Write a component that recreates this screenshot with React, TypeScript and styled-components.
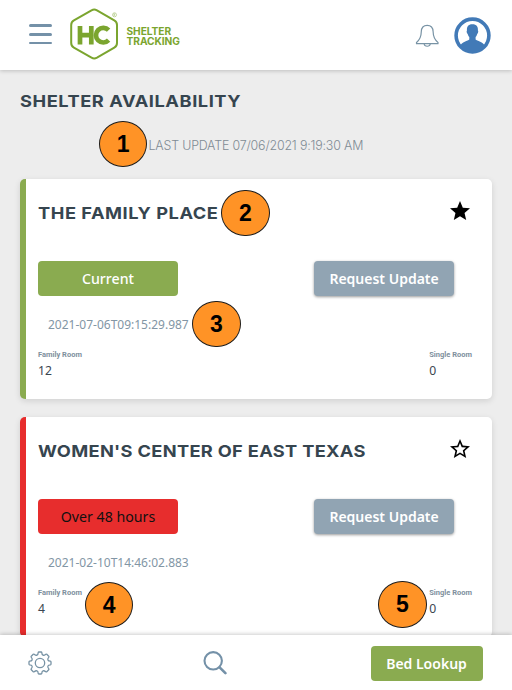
import React from "react";
import styled, { createGlobalStyle } from "styled-components";
import { MdStar, MdStarBorder } from "react-icons/md";

const GlobalStyle = createGlobalStyle`
  *, *::before, *::after { box-sizing: border-box; }
  html, body { margin: 0; padding: 0; overflow: hidden; }
  body { background: #ededed; }
  h1, h2, p { margin: 0; }
  button { border: 0; padding: 0; background: none; display: block; }
  svg { display: block; }
`;

const body = `"Noto Sans", "Open Sans", sans-serif`;
const display = `Inter, "Liberation Sans", sans-serif`;

const Screen = styled.div`
  position: relative;
  display: flex;
  flex-direction: column;
  width: 512px;
  height: 690px;
  overflow: hidden;
  background: #ededed;
  font-family: ${body};
`;

const Header = styled.header`
  z-index: 1;
  display: flex;
  align-items: center;
  flex: 0 0 70px;
  padding: 0 21px 0 29px;
  background: #fff;
  box-shadow: 0 1px 4px rgba(0, 0, 0, 0.2);
`;

const MenuButton = styled.button`
  display: flex;
  flex-direction: column;
  gap: 6.5px;
  width: 23px;
  margin: 0 18px 1.4px 0;
`;

const MenuLine = styled.span`
  height: 2.4px;
  border-radius: 2px;
  background: #7491a8;
`;

const Brand = styled.div`
  display: flex;
  align-items: center;
  flex: 1;
  gap: 7.5px;
`;

const BrandName = styled.div`
  display: flex;
  flex-direction: column;
  padding-top: 1px;
  font: 700 10.2px/10px ${display};
  letter-spacing: -0.05px;
  color: #7ba52f;
`;

const HeaderActions = styled.div`
  display: flex;
  align-items: center;
  gap: 15px;
`;

const Main = styled.main`
  flex: 1;
  min-height: 0;
  overflow: hidden;
  padding: 20px 20px 0;
`;

const PageTitle = styled.h1`
  font: 700 16.6px/22px ${display};
  letter-spacing: 0.49px;
  color: #36454f;
  white-space: nowrap;
  transform: scaleX(1.1);
  transform-origin: left;
`;

const LastUpdate = styled.p`
  margin: 24px 0 24px 128.5px;
  font: 300 12.4px/19px ${display};
  letter-spacing: -0.17px;
  color: #7f8b94;
  white-space: nowrap;
`;

const Card = styled.section<{ $accent: string }>`
  height: 220px;
  margin-bottom: 18px;
  padding: 20px 20px 0 12px;
  border-left: 6px solid ${(p) => p.$accent};
  border-radius: 5px;
  background: #fff;
  box-shadow: 0 2px 6px rgba(0, 0, 0, 0.12);
`;

const CardHeader = styled.div`
  display: flex;
  justify-content: space-between;
  height: 62px;
  color: #000;
`;

const CardTitle = styled.h2<{ $spacing: number }>`
  height: 25px;
  padding-top: 3px;
  font: 700 16.6px/22px ${display};
  letter-spacing: ${(p) => p.$spacing}px;
  color: #36454f;
  white-space: nowrap;
  transform: scaleX(1.1);
  transform-origin: left;
`;

const CardActions = styled.div`
  display: flex;
  justify-content: space-between;
  padding-right: 17.6px;
`;

const Status = styled.div<{ $accent: string; $dark?: boolean }>`
  width: 140px;
  height: 35px;
  border-radius: 4px;
  background: ${(p) => p.$accent};
  color: ${(p) => (p.$dark ? "#111" : "#fff")};
  font: ${(p) => (p.$dark ? 400 : 500)} 14.2px/35px ${body};
  text-align: center;
`;

const ActionButton = styled.button<{ $primary?: boolean }>`
  width: ${(p) => (p.$primary ? 112 : 140.7)}px;
  height: 35px;
  border-radius: 4px;
  background: ${(p) => (p.$primary ? "#8aab50" : "#91a4b3")};
  box-shadow: ${(p) => (p.$primary ? "none" : "0 1px 3px rgba(0, 0, 0, 0.4)")};
  color: #fff;
  font: 600 14px/35px ${body};
  text-align: center;
`;

const Timestamp = styled.p`
  margin: 19px 0 0 10px;
  font: 400 12px/20px ${body};
  color: #8296a5;
`;

const Rooms = styled.div`
  display: flex;
  justify-content: space-between;
  margin-top: 14px;
`;

const RoomLabel = styled.div`
  font: 700 7.5px/12px Roboto, sans-serif;
  color: #7e909d;
  white-space: nowrap;
`;

const RoomCount = styled.div`
  margin-top: 1px;
  font: 400 12.2px/18px ${body};
  color: #3b4650;
`;

const Footer = styled.footer`
  z-index: 1;
  display: grid;
  grid-template-columns: 175px 1fr auto;
  align-items: center;
  flex: 0 0 55px;
  padding: 1px 29.5px 0 28px;
  background: #fff;
  box-shadow: 0 -1px 4px rgba(0, 0, 0, 0.2);
`;

const Marker = styled.span<{ $x: number; $y: number }>`
  position: absolute;
  z-index: 2;
  left: ${(p) => p.$x}px;
  top: ${(p) => p.$y}px;
  width: 48.4px;
  height: 46.6px;
  border: 1.3px solid #1d1d1d;
  border-radius: 50%;
  background: #ff9326;
  color: #000;
  font: 700 23px/45px "Liberation Sans", sans-serif;
  text-align: center;
`;

const Logo = () => (
  <svg width="49" height="54" viewBox="0 0 49 54" fill="none">
    <path
      d="M21.5 2.3Q24.2 .8 27 2.3L44.3 12.3Q47 13.9 47 17V35Q47 38.1 44.3 39.7L27 49.7Q24.2 51.2 21.5 49.7L3.9 39.7Q1.2 38.1 1.2 35V17Q1.2 13.9 3.9 12.3Z"
      stroke="#7ba52f"
      strokeWidth="2"
    />
    <path d="M10 18V36.4M21.3 18V36.4M10 27.2H21.3" stroke="#7ba52f" strokeWidth="4.7" />
    <path d="M38.6 22.2A7.3 7.3 0 1 0 38.6 32.2" stroke="#7ba52f" strokeWidth="4.7" />
    <circle cx="44.5" cy="6.8" r="2" stroke="#9dbc66" strokeWidth="0.6" />
    <path d="M43.9 7.9V5.8H44.7Q45.4 6.5 44 6.9L45.1 7.9" stroke="#9dbc66" strokeWidth="0.45" />
  </svg>
);

const Bell = () => (
  <svg width="24" height="24" viewBox="0 0 24 24" fill="none" stroke="#7893a5" strokeWidth="1.2" strokeLinejoin="round">
    <path d="M12.2 2.3C8.6 2.3 6.4 4.8 6.3 8.6C6.2 13.8 5.3 16.6 1.5 19.4V20.7H23V19.4C19.1 16.6 18.2 13.8 18.1 8.6C18 4.8 15.8 2.3 12.2 2.3Z" />
    <path d="M9.2 21C9.5 24 14.9 24 15.2 21" />
  </svg>
);

const Avatar = () => (
  <svg width="37" height="37" viewBox="0 0 37 37">
    <circle cx="18.5" cy="18.5" r="16.4" fill="#fff" stroke="#427ab7" strokeWidth="3.6" />
    <path
      d="M18.4 7.3C14.2 7.3 12.5 9.9 13 13.5C12.3 13.6 12.7 16.6 13.6 16.7C14 18.4 14.6 19.2 15.3 20V22.4C14.2 24.1 7.4 24.2 6 29.5C12 37 25 37 31 29.5C29.6 24.2 22.7 24.1 21.6 22.4V20C22.3 19.2 22.9 18.4 23.3 16.7C24.2 16.6 24.6 13.6 23.9 13.5C24.3 9.9 22.6 7.3 18.4 7.3Z"
      fill="#427ab7"
    />
  </svg>
);

const Gear = () => (
  <svg width="24" height="24" viewBox="0 0 24 24" fill="none" stroke="#7893a5" strokeWidth="1.3" strokeLinejoin="round">
    <path d="M10.2 1.6Q10.3 1 10.9 1H13.1Q13.7 1 13.8 1.6Q13.9 3.7 15 4.1Q16.1 4.6 17.8 3.2Q18.3 2.9 18.8 3.3L20.7 5.2Q21.1 5.7 20.8 6.2Q19.4 7.9 19.9 9Q20.3 10.1 22.4 10.2Q23 10.3 23 10.9V13.1Q23 13.7 22.4 13.8Q20.3 13.9 19.9 15Q19.4 16.1 20.8 17.8Q21.1 18.3 20.7 18.8L18.8 20.7Q18.3 21.1 17.8 20.8Q16.1 19.4 15 19.9Q13.9 20.3 13.8 22.4Q13.7 23 13.1 23H10.9Q10.3 23 10.2 22.4Q10.1 20.3 9 19.9Q7.9 19.4 6.2 20.8Q5.7 21.1 5.2 20.7L3.3 18.8Q2.9 18.3 3.2 17.8Q4.6 16.1 4.1 15Q3.7 13.9 1.6 13.8Q1 13.7 1 13.1V10.9Q1 10.3 1.6 10.2Q3.7 10.1 4.1 9Q4.6 7.9 3.2 6.2Q2.9 5.7 3.3 5.2L5.2 3.3Q5.7 2.9 6.2 3.2Q7.9 4.6 9 4.1Q10.1 3.7 10.2 1.6Z" />
    <circle cx="12" cy="12" r="4.7" />
  </svg>
);

const Search = () => (
  <svg width="24" height="24" viewBox="0 0 24 24" fill="none" stroke="#7491a8">
    <circle cx="10.2" cy="9.8" r="8.7" strokeWidth="2.1" />
    <path d="M16.6 16.4L22.4 22.2" strokeWidth="2.6" strokeLinecap="round" />
  </svg>
);

interface Shelter {
  name: string;
  nameSpacing: number;
  status: string;
  accent: string;
  dark?: boolean;
  favorite?: boolean;
  updated: string;
  family: number;
  single: number;
}

const shelters: Shelter[] = [
  {
    name: "THE FAMILY PLACE",
    nameSpacing: 0.48,
    status: "Current",
    accent: "#8aab50",
    favorite: true,
    updated: "2021-07-06T09:15:29.987",
    family: 12,
    single: 0,
  },
  {
    name: "WOMEN'S CENTER OF EAST TEXAS",
    nameSpacing: 0.28,
    status: "Over 48 hours",
    accent: "#e72d2d",
    dark: true,
    updated: "2021-02-10T14:46:02.883",
    family: 4,
    single: 0,
  },
];

const markers = [
  { x: 99, y: 120.5 },
  { x: 221.2, y: 189.6 },
  { x: 192.2, y: 300.6 },
  { x: 85, y: 581.8 },
  { x: 378.2, y: 581.2 },
];

const ShelterCard = ({ shelter }: { shelter: Shelter }) => (
  <Card $accent={shelter.accent}>
    <CardHeader>
      <CardTitle $spacing={shelter.nameSpacing}>{shelter.name}</CardTitle>
      {shelter.favorite ? <MdStar size={24} /> : <MdStarBorder size={24} />}
    </CardHeader>
    <CardActions>
      <Status $accent={shelter.accent} $dark={shelter.dark}>{shelter.status}</Status>
      <ActionButton>Request Update</ActionButton>
    </CardActions>
    <Timestamp>{shelter.updated}</Timestamp>
    <Rooms>
      <div>
        <RoomLabel>Family Room</RoomLabel>
        <RoomCount>{shelter.family}</RoomCount>
      </div>
      <div>
        <RoomLabel>Single Room</RoomLabel>
        <RoomCount>{shelter.single}</RoomCount>
      </div>
    </Rooms>
  </Card>
);

export default function App() {
  return (
    <Screen>
      <GlobalStyle />
      <Header>
        <MenuButton aria-label="Menu">
          <MenuLine />
          <MenuLine />
          <MenuLine />
        </MenuButton>
        <Brand>
          <Logo />
          <BrandName>
            <span>SHELTER</span>
            <span>TRACKING</span>
          </BrandName>
        </Brand>
        <HeaderActions>
          <Bell />
          <Avatar />
        </HeaderActions>
      </Header>
      <Main>
        <PageTitle>SHELTER AVAILABILITY</PageTitle>
        <LastUpdate>LAST UPDATE 07/06/2021 9:19:30 AM</LastUpdate>
        {shelters.map((s) => (
          <ShelterCard key={s.name} shelter={s} />
        ))}
      </Main>
      <Footer>
        <Gear />
        <Search />
        <ActionButton $primary>Bed Lookup</ActionButton>
      </Footer>
      {markers.map((m, i) => (
        <Marker key={i} $x={m.x} $y={m.y}>{i + 1}</Marker>
      ))}
    </Screen>
  );
}
